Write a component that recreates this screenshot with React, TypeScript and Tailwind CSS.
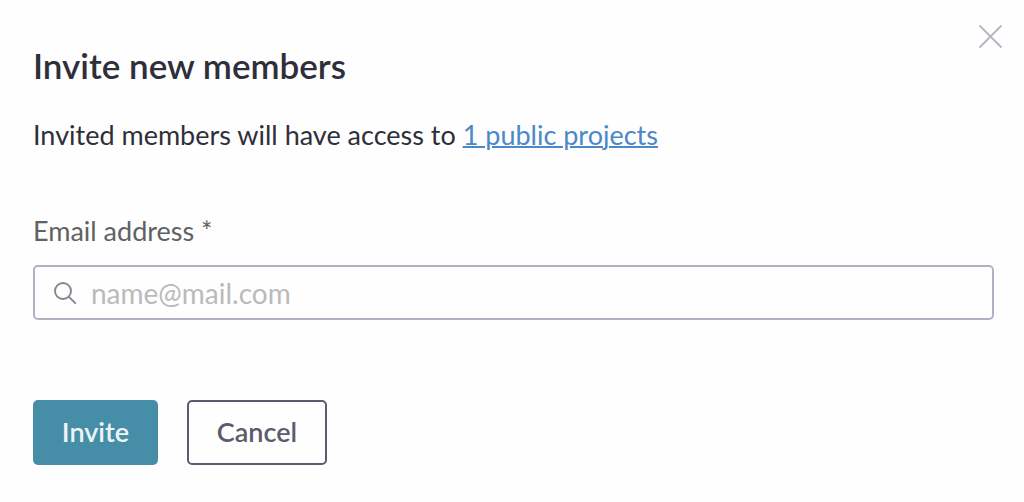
export default function App() {
  return (
    <main className="relative min-h-screen bg-[#fefefe] pt-[44px] pr-[30px] pb-9 pl-[33px] font-['Lato','Noto_Sans',sans-serif] text-[#2e2f3a]">
      <button type="button" aria-label="Close" className="absolute top-[24px] right-[21px] size-[25px] text-[#b4b5c2]">
        <svg viewBox="0 0 25 25" className="size-full" fill="none" stroke="currentColor" strokeWidth="1.8">
          <path d="M1.5 1.5 23.5 23.5M23.5 1.5 1.5 23.5" />
        </svg>
      </button>
      <h1 className="text-[35px] leading-[42px] font-semibold">Invite new members</h1>
      <p className="mt-8 text-[27px] leading-[34px]">
        Invited members will have access to{' '}
        <a href="#projects" className="text-[#4b88c8] underline decoration-2 underline-offset-1">1 public projects</a>
      </p>
      <form>
        <label htmlFor="email" className="mt-[62px] block text-[27px] leading-[34px] text-[#616164]">Email address *</label>
        <div className="mt-[17px] flex h-[55px] items-center gap-[14px] rounded-[5px] border-2 border-[#b0b2c1] px-[18px]">
          <svg viewBox="0 0 24 24" className="size-6 shrink-0 text-[#858692]" fill="none" stroke="currentColor" strokeWidth="1.9">
            <circle cx="10" cy="10" r="8" />
            <path d="m15.7 15.7 7 7" />
          </svg>
          <input id="email" type="email" placeholder="name@mail.com" className="min-w-0 flex-1 bg-transparent text-[28px] leading-[34px] outline-none placeholder:text-[#bababa]" />
        </div>
        <div className="mt-20 flex gap-[29px]">
          <button type="submit" className="h-[65px] w-[125px] rounded-[5px] bg-[#468ea7] text-[27px] font-semibold text-[#eef4f6]">Invite</button>
          <button type="button" className="h-[65px] w-[140px] rounded-[5px] border-2 border-[#5b5c70] text-[27px] font-semibold text-[#5b5c6b]">Cancel</button>
        </div>
      </form>
    </main>
  )
}
